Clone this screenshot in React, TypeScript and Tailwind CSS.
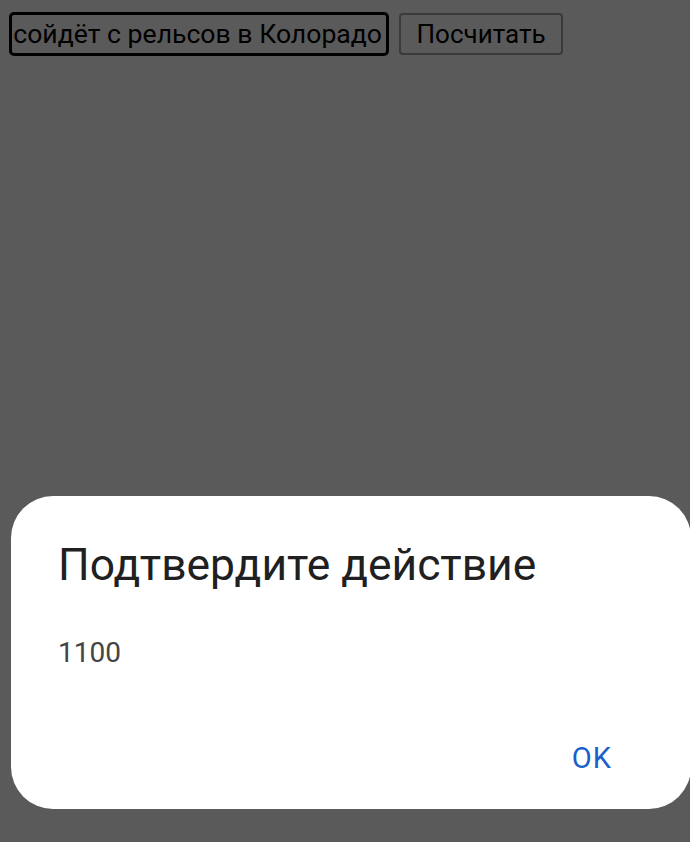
export default function App() {
  return (
    <div className="h-[842px] w-[690px] overflow-hidden bg-[#5a5a5a] flex flex-col font-['Roboto','Noto_Sans',sans-serif]">
      {/* top form */}
      <div className="flex items-center pl-[9px] pt-[12px] gap-[10px]">
        <div className="w-[380px] h-[44px] border-[3px] border-black rounded-[5px] overflow-hidden flex items-center justify-end pr-[4px]">
          <span className="whitespace-nowrap text-[26.6px] text-black leading-none">
            сойдёт с рельсов в Колорадо
          </span>
        </div>
        <button className="w-[164px] h-[42px] border-2 border-[#3a3a3a] rounded-[4px] text-[26px] text-black leading-none flex items-center justify-center">
          Посчитать
        </button>
      </div>

      {/* alert dialog */}
      <div className="mt-auto mb-[33px] ml-[11px] w-[680px] h-[313px] shrink-0 bg-white rounded-[42px] flex flex-col pl-[47px] pt-[43px]">
        <h2 className="text-[44.4px] leading-[52px] text-[#202020]">Подтвердите действие</h2>
        <p className="mt-[45px] text-[28px] leading-[34px] text-[#444444]">1100</p>
        <div className="mt-auto mb-[35px] flex justify-end pr-[79px]">
          <span className="text-[29px] leading-[32px] tracking-[1px] text-[#1a5fcc]">OK</span>
        </div>
      </div>
    </div>
  );
}
